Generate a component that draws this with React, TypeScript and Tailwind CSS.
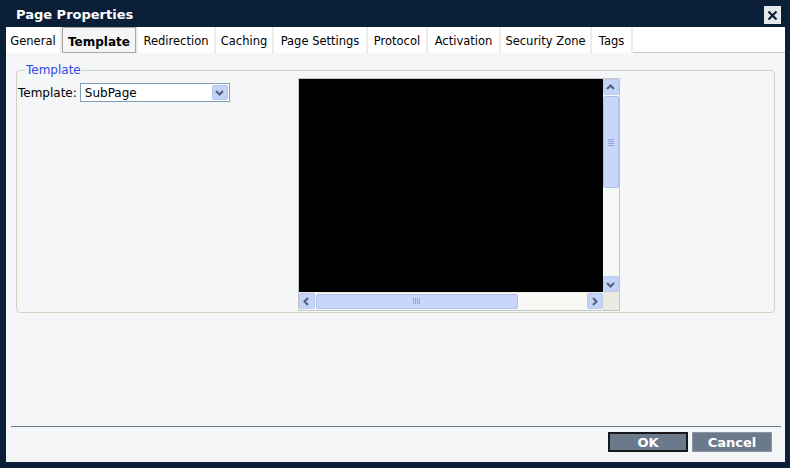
import React from "react";

const tabs = [
  { label: "General", w: "w-[54px]" },
  { label: "Template", w: "w-[74px]", active: true },
  { label: "Redirection", w: "w-[76px]" },
  { label: "Caching", w: "w-[56px]" },
  { label: "Page Settings", w: "w-[92px]" },
  { label: "Protocol", w: "w-[58px]" },
  { label: "Activation", w: "w-[71px]" },
  { label: "Security Zone", w: "w-[89px]" },
  { label: "Tags", w: "w-[39px]" },
];

function Chevron({ dir }: { dir: "up" | "down" | "left" | "right" }) {
  const d = {
    up: "M2 7 L5.5 3.5 L9 7",
    down: "M2 4 L5.5 7.5 L9 4",
    left: "M7 2 L3.5 5.5 L7 9",
    right: "M4 2 L7.5 5.5 L4 9",
  }[dir];
  return (
    <svg width="11" height="11" viewBox="0 0 11 11">
      <path d={d} fill="none" stroke="#4d6185" strokeWidth="2" />
    </svg>
  );
}

function ArrowButton({ dir }: { dir: "up" | "down" | "left" | "right" }) {
  return (
    <div className="w-[16px] h-[16px] rounded-[2px] border border-[#b9c9ef] bg-[#c4d4f7] flex items-center justify-center">
      <Chevron dir={dir} />
    </div>
  );
}

export default function App() {
  return (
    <div
      className="w-[790px] h-[468px] bg-[#0b2038] flex flex-col"
      style={{ fontFamily: '"DejaVu Sans", Verdana, sans-serif' }}
    >
      <div className="h-[27px] flex items-center justify-between pl-[16px] pr-[9px]">
        <span className="text-white font-bold text-[13px] leading-none mt-[2px]">Page Properties</span>
        <div className="w-[17px] h-[18px] bg-[#e6e8ec] flex items-center justify-center mt-[3px]">
          <svg width="11" height="11" viewBox="0 0 11 11">
            <path d="M1.5 1.5 L9.5 9.5 M9.5 1.5 L1.5 9.5" stroke="#0b2038" strokeWidth="2.2" />
          </svg>
        </div>
      </div>

      <div className="ml-[6px] mr-[5px] h-[435px] bg-[#f5f6f8] flex flex-col">
        <div className="h-[26px] bg-[#ececec] flex">
          {tabs.map((t, i) => (
            <div
              key={t.label}
              className={`${t.w} ${i > 0 ? "ml-[2px]" : ""} h-full flex items-center justify-center pt-[3px] text-[11.5px] text-black ${
                t.active
                  ? "bg-[#f4f5f6] border border-[#a9a9a9] font-bold text-[12px]"
                  : "bg-white"
              }`}
            >
              {t.label}
            </div>
          ))}
          <div className="flex-1 border-b border-[#c7c7bf] ml-[2px] bg-white" />
        </div>

        <div className="flex-1 flex flex-col px-[10px] pt-[10px]">
          <fieldset className="relative border border-[#d3d3c4] rounded-[4px] h-[250px] px-[1px] pb-0 pt-0">
            <legend className="ml-[7px] px-[1px] text-[12px] leading-[14px] text-[#2e48e8]">Template</legend>
            <div className="flex mt-[6px]">
              <div className="flex items-center h-[19px]">
                <span className="text-[12px] text-black">Template:</span>
                <div className="ml-[3px] w-[150px] h-[19px] border border-[#7f9db9] bg-white flex items-center justify-between pl-[4px] pr-[1px]">
                  <span className="text-[12px] text-black">SubPage</span>
                  <div className="w-[16px] h-[15px] rounded-[2px] bg-[#c3d3f5] border border-[#b0c4ee] flex items-center justify-center">
                    <Chevron dir="down" />
                  </div>
                </div>
              </div>
              <div className="ml-[68px] -mt-[5px] w-[322px] h-[233px] border border-[#c5c5c5] bg-[#ecebe3] flex flex-col">
                <div className="flex h-[213px]">
                  <div className="flex-1 bg-black" />
                  <div className="w-[16px] bg-[#f7f7f3] flex flex-col">
                    <ArrowButton dir="up" />
                    <div className="mt-[1px] h-[92px] rounded-[2px] border border-[#aebfe8] bg-[#c7d6fa] flex items-center justify-center">
                      <div className="flex flex-col gap-[1px]">
                        <div className="w-[6px] h-[1px] bg-[#8ea6da]" />
                        <div className="w-[6px] h-[1px] bg-[#8ea6da]" />
                        <div className="w-[6px] h-[1px] bg-[#8ea6da]" />
                        <div className="w-[6px] h-[1px] bg-[#8ea6da]" />
                      </div>
                    </div>
                    <div className="flex-1" />
                    <ArrowButton dir="down" />
                  </div>
                </div>
                <div className="flex h-[18px] items-center">
                  <div className="w-[304px] h-[17px] bg-[#f8f8f4] flex items-center">
                    <ArrowButton dir="left" />
                    <div className="ml-[1px] w-[202px] h-[15px] rounded-[2px] border border-[#aebfe8] bg-[#c7d6fa] flex items-center justify-center">
                      <div className="flex gap-[1px]">
                        <div className="w-[1px] h-[6px] bg-[#8ea6da]" />
                        <div className="w-[1px] h-[6px] bg-[#8ea6da]" />
                        <div className="w-[1px] h-[6px] bg-[#8ea6da]" />
                        <div className="w-[1px] h-[6px] bg-[#8ea6da]" />
                      </div>
                    </div>
                    <div className="flex-1" />
                    <ArrowButton dir="right" />
                  </div>
                  <div className="flex-1 h-full bg-[#ecebe3]" />
                </div>
              </div>
            </div>
          </fieldset>

          <div className="flex-1" />
          <div className="ml-[-5px] mr-[-6px] h-[1px] bg-[#6c7a8a]" />
          <div className="flex justify-end gap-[4px] pt-[5px] pb-[10px] pr-[3px]">
            <button className="w-[80px] h-[20px] bg-[#6b7a8b] border-2 border-[#16181c] text-white font-bold text-[13px] leading-none">
              OK
            </button>
            <button className="w-[80px] h-[20px] bg-[#6b7a8b] border border-[#8c96a2] text-white font-bold text-[13px] leading-none">
              Cancel
            </button>
          </div>
        </div>
      </div>
    </div>
  );
}
